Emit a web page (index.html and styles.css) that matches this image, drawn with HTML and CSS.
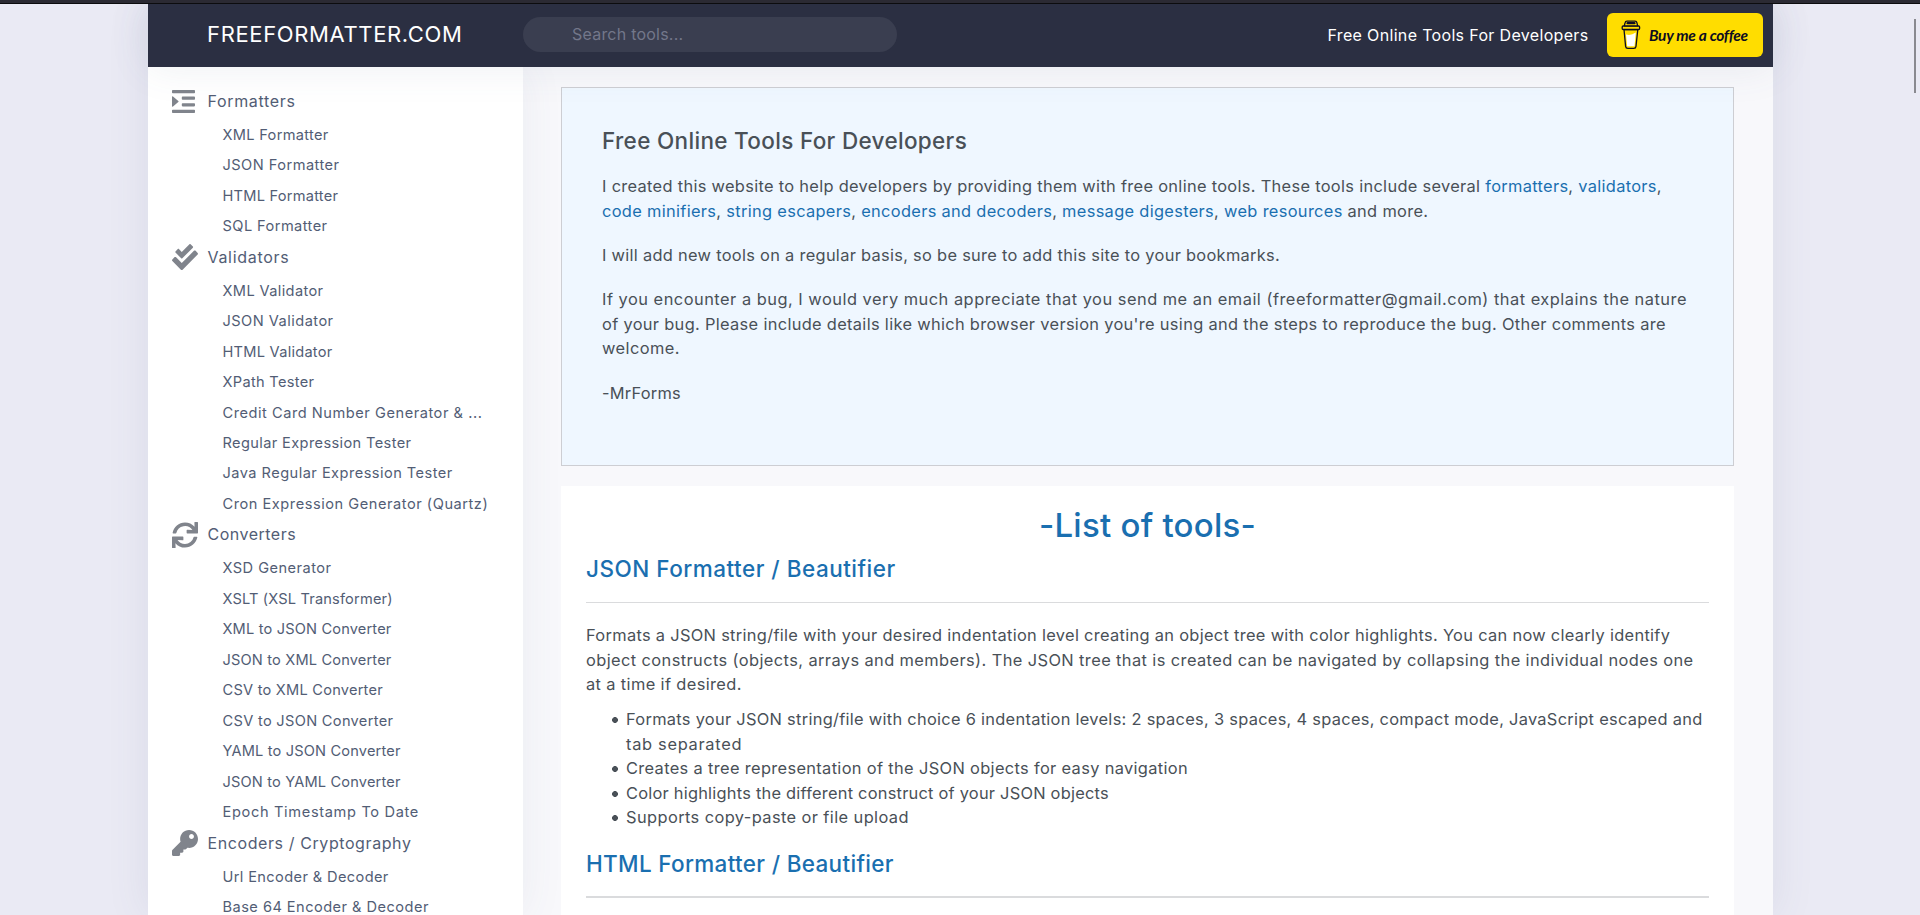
FILE: index.html
```html
<!DOCTYPE html>
<html lang="en">
<head>
<meta charset="utf-8">
<title>Free Online Tools For Developers</title>
<link rel="stylesheet" href="styles.css">
</head>
<body>
<div class="topline"></div>
<div class="scrollbar"></div>
<div class="page">
  <header class="header">
    <a class="logo">FREEFORMATTER.COM</a>
    <div class="search">Search tools...</div>
    <span class="tagline">Free Online Tools For Developers</span>
    <a class="coffee">
      <svg class="cup" viewBox="0 0 20 30" fill="none" stroke="#0d0c22" stroke-width="1.3" stroke-linejoin="round" stroke-linecap="round">
        <path d="M3 9.500 4.600 26.400Q4.800 28.400 6.800 28.400H12.800Q14.800 28.400 15 26.400L16.800 9.500z" fill="#ffdd00"/>
        <path d="M5 14.500Q10 16 14.800 12.500L13.500 26.300H6.200z" fill="#fff" stroke="none"/>
        <path d="M2.200 6H17.600Q18.600 6 18.600 7V8.500Q18.600 9.500 17.600 9.500H2.200Q1.200 9.500 1.200 8.500V7Q1.200 6 2.200 6z" fill="#ffdd00"/>
        <path d="M3.300 5.800 4 3Q4.400 1.200 6 1.200H14Q15.600 1.200 16 3L16.600 5.800z" fill="#ffdd00"/>
        <path d="M6.500 3.200h7" stroke-width="2.200"/>
      </svg>
      <span class="coffee-text">Buy me a coffee</span>
    </a>
  </header>
  <div class="columns">
    <nav class="sidebar">
      <h4 class="group t66"><span class="icon"><svg width="23" height="23" viewBox="0 0 23 23"><path d="M.8 0h21.400q.8 0 .8.800v1.600q0 .8-.8.800H.8Q0 3.200 0 2.400V.8Q0 0 .8 0zM10.600 6.600h11.600q.8 0 .8.800V9q0 .8-.8.800H10.600q-.8 0-.8-.8V7.400q0-.8.8-.8zM10.600 13.200h11.600q.8 0 .8.800v1.600q0 .8-.8.800H10.600q-.8 0-.8-.8V14q0-.8.8-.8zM.8 19.800h21.400q.8 0 .8.800v1.600q0 .8-.8.800H.8q-.8 0-.8-.8v-1.600q0-.8.8-.8zM0 7q0-1.300 1-.5l5.300 4.400q.7.600 0 1.200L1 16.500q-1 .8-1-.5z"/></svg></span>Formatters</h4>
      <a class="item t31">XML Formatter</a>
      <a class="item t46">JSON Formatter</a>
      <a class="item t23">HTML Formatter</a>
      <a class="item t42">SQL Formatter</a>
      <h4 class="group t70"><span class="icon"><svg width="26" height="26" viewBox="0 0 512 512"><path d="M505 174.800l-39.600-39.600c-9.400-9.400-24.600-9.400-33.900 0L192 374.700 80.600 263.200c-9.400-9.400-24.600-9.400-33.900 0L7 302.900c-9.400 9.400-9.400 24.600 0 34L175 505c9.400 9.400 24.600 9.400 33.900 0l296-296.200c9.400-9.500 9.400-24.700.1-34zm-324.300 106c6.200 6.300 16.400 6.300 22.600 0l208-208.200c6.200-6.300 6.200-16.400 0-22.600L366.100 4.700c-6.200-6.300-16.400-6.300-22.600 0L192 156.200l-55.400-55.500c-6.200-6.300-16.400-6.300-22.600 0L68.700 146c-6.200 6.300-6.200 16.400 0 22.600l112 112.200z"/></svg></span>Validators</h4>
      <a class="item t38">XML Validator</a>
      <a class="item t46">JSON Validator</a>
      <a class="item t26">HTML Validator</a>
      <a class="item t31">XPath Tester</a>
      <a class="item t54">Credit Card Number Generator &amp; ...</a>
      <a class="item t38">Regular Expression Tester</a>
      <a class="item t46">Java Regular Expression Tester</a>
      <a class="item t54">Cron Expression Generator (Quartz)</a>
      <h4 class="group t50"><span class="icon"><svg width="26" height="26" viewBox="0 0 512 512"><path d="M440.650 12.570l4 82.770A247.160 247.160 0 0 0 255.830 8C134.730 8 33.910 94.920 12.290 209.820A12 12 0 0 0 24.090 224h49.050a12 12 0 0 0 11.670-9.260 175.910 175.910 0 0 1 317-56.940l-101.460-4.860a12 12 0 0 0-12.570 12v47.410a12 12 0 0 0 12 12H500a12 12 0 0 0 12-12V12a12 12 0 0 0-12-12h-47.370a12 12 0 0 0-11.980 12.570zM255.830 432a175.610 175.610 0 0 1-146-77.800l101.800 4.870a12 12 0 0 0 12.570-12v-47.400a12 12 0 0 0-12-12H12a12 12 0 0 0-12 12V500a12 12 0 0 0 12 12h47.350a12 12 0 0 0 12-12.600l-4.150-82.570A247.170 247.170 0 0 0 255.830 504c121.110 0 221.930-86.920 243.550-201.820a12 12 0 0 0-11.800-14.180h-49.050a12 12 0 0 0-11.670 9.260A175.860 175.860 0 0 1 255.830 432z"/></svg></span>Converters</h4>
      <a class="item t46">XSD Generator</a>
      <a class="item t17">XSLT (XSL Transformer)</a>
      <a class="item t17">XML to JSON Converter</a>
      <a class="item t17">JSON to XML Converter</a>
      <a class="item t23">CSV to XML Converter</a>
      <a class="item t31">CSV to JSON Converter</a>
      <a class="item t17">YAML to JSON Converter</a>
      <a class="item t17">JSON to YAML Converter</a>
      <a class="item t66">Epoch Timestamp To Date</a>
      <h4 class="group t60"><span class="icon"><svg width="26" height="26" viewBox="0 0 512 512"><path d="M512 176.001C512 273.203 433.202 352 336 352c-11.220 0-22.190-1.062-32.827-3.069l-24.012 27.014A23.999 23.999 0 0 1 261.223 384H224v40c0 13.255-10.745 24-24 24h-40v40c0 13.255-10.745 24-24 24H24c-13.255 0-24-10.745-24-24v-78.059c0-6.365 2.529-12.470 7.029-16.971l161.802-161.802C163.108 213.814 160 195.271 160 176 160 78.798 238.797.001 335.999 0 433.488-.001 512 78.511 512 176.001zM336 128c0 26.510 21.490 48 48 48s48-21.490 48-48-21.490-48-48-48-48 21.490-48 48z"/></svg></span>Encoders / Cryptography</h4>
      <a class="item t38">Url Encoder &amp; Decoder</a>
      <a class="item t46">Base 64 Encoder &amp; Decoder</a>
    </nav>
    <main class="content">
      <section class="intro">
        <h2 class="intro-title">Free Online Tools For Developers</h2>
        <p><span class="t31">I created this website to help developers by providing them with free online tools. These tools include several <a>formatters</a>, <a>validators</a>,</span><br>
        <span class="t32"><a>code minifiers</a>, <a>string escapers</a>, <a>encoders and decoders</a>, <a>message digesters</a>, <a>web resources</a> and more.</span></p>
        <p class="t30">I will add new tools on a regular basis, so be sure to add this site to your bookmarks.</p>
        <p><span class="t50">If you encounter a bug, I would very much appreciate that you send me an email (freeformatter@gmail.com) that explains the nature</span><br>
        <span class="t32">of your bug. Please include details like which browser version you're using and the steps to reproduce the bug. Other comments are</span><br>
        <span class="t42">welcome.</span></p>
        <p class="t23">-MrForms</p>
      </section>
      <section class="tools">
        <h1 class="tools-title">-List of tools-</h1>
        <h2 class="tool-name t50">JSON Formatter / Beautifier</h2>
        <hr class="rule">
        <p><span class="t31">Formats a JSON string/file with your desired indentation level creating an object tree with color highlights. You can now clearly identify</span><br>
        <span class="t405">object constructs (objects, arrays and members). The JSON tree that is created can be navigated by collapsing the individual nodes one</span><br>
        <span class="t38">at a time if desired.</span></p>
        <ul class="features">
          <li><span class="t29">Formats your JSON string/file with choice 6 indentation levels: 2 spaces, 3 spaces, 4 spaces, compact mode, JavaScript escaped and</span><br><span class="t70">tab separated</span></li>
          <li class="t34">Creates a tree representation of the JSON objects for easy navigation</li>
          <li class="t23">Color highlights the different construct of your JSON objects</li>
          <li class="t405">Supports copy-paste or file upload</li>
        </ul>
        <h2 class="tool-name t32">HTML Formatter / Beautifier</h2>
        <hr class="rule thick">
      </section>
    </main>
  </div>
</div>
</body>
</html>
```
FILE: styles.css
```css
* { box-sizing: border-box; }
html, body { height: 100%; overflow: hidden; }
body {
  margin: 0;
  background: #eaeaf4;
  color: #495057;
  font: 16.4px/24.6px Inter, "Liberation Sans", sans-serif;
}
h1, h2, h4, p, ul { margin: 0; padding: 0; }

.topline { height: 4px; background: #2b2a33; border-bottom: 1px solid #0c0c0e; position: relative; z-index: 3; }
.scrollbar { position: fixed; top: 19px; left: 1914px; width: 2px; height: 74px; background: #8a8a90; }

.page {
  width: 1625px;
  height: 911px;
  margin-left: 148px;
  background: #f8f8fb;
  box-shadow: 0 0 40px rgba(82, 85, 130, .1);
}

.header {
  position: relative;
  z-index: 2;
  display: flex;
  align-items: center;
  height: 63px;
  padding: 0 10px 0 59px;
  background: #2b2f42;
  color: #fff;
  box-shadow: 0 0 40px rgba(82, 95, 127, .1);
}
.logo { width: 316px; font-size: 22px; letter-spacing: .64px; padding-bottom: 2px; }
.search {
  width: 374px;
  height: 35px;
  margin-top: -2px;
  padding-left: 49px;
  border-radius: 18px;
  background: #3a3e50;
  color: #73778a;
  font-size: 16px;
  line-height: 34px;
  letter-spacing: .22px;
}
.tagline { margin-left: auto; font-size: 16px; letter-spacing: .336px; padding-right: 18.5px; }
.coffee {
  display: flex;
  align-items: center;
  width: 156px;
  height: 44px;
  margin-top: -2px;
  padding-left: 14px;
  border-radius: 6px;
  background: #fd0;
  color: #0d0c22;
}
.cup { width: 20px; height: 30px; margin-right: 8px; }
.coffee-text { font: italic 700 15.5px/30px Lato, sans-serif; white-space: nowrap; letter-spacing: -.28px; }

.columns { display: flex; height: 848px; overflow: hidden; }

.sidebar { width: 375px; flex: none; padding-top: 18.8px; background: #fff; color: #525d75; box-shadow: 0 0 40px rgba(82, 95, 127, .08); }
.group {
  display: flex;
  align-items: center;
  gap: 9.5px;
  height: 34px;
  padding: 0 0 3.2px 24px;
  font-size: 16px;
  font-weight: 400;
  line-height: 30.8px;
}
.icon { display: flex; width: 26px; fill: #80848c; }
.item { display: block; height: 30.48px; padding-left: 74.5px; font-size: 14.6px; line-height: 30.48px; white-space: nowrap; }

.content { padding: 20px 39px 0 38px; width: 1250px; }
.intro {
  height: 379px;
  padding: 39.4px 40px 0;
  border: 1px solid #cdced3;
  background: #eff7ff;
  white-space: nowrap;
}
.intro-title { margin-bottom: 19.8px; font-size: 22.5px; font-weight: 500; line-height: 27px; letter-spacing: .32px; }
.intro p { margin-bottom: 19.6px; }
.intro a { color: #1a6fb0; }

.tools { height: 440px; margin-top: 20px; padding: 18.7px 25px 0; background: #fff; white-space: nowrap; }
.tools-title { color: #1a6fb0; font-size: 33px; font-weight: 500; line-height: 40px; letter-spacing: .25px; text-align: center; }
.tool-name { margin-top: 10.3px; color: #1a6fb0; font-size: 22.5px; font-weight: 500; line-height: 27px; }
.rule { margin: 20px 0; border: 0; height: 1px; background: #dadbdd; }
.rule.thick { height: 2px; margin-top: 19px; }
.features { margin: 10.3px 0 20.300px; padding-left: 26px; list-style: none; }
.features li { padding-left: 14px; background: radial-gradient(circle at 3px 13px, #495057 2.600px, transparent 3.200px) no-repeat; }

.t17 { letter-spacing: .165px; }
.t23 { letter-spacing: .234px; }
.t26 { letter-spacing: .257px; }
.t29 { letter-spacing: .29px; }
.t30 { letter-spacing: .295px; }
.t31 { letter-spacing: .311px; }
.t32 { letter-spacing: .321px; }
.t34 { letter-spacing: .343px; }
.t38 { letter-spacing: .375px; }
.t405 { letter-spacing: .405px; }
.t42 { letter-spacing: .43px; }
.t46 { letter-spacing: .465px; }
.t50 { letter-spacing: .497px; }
.t54 { letter-spacing: .535px; }
.t60 { letter-spacing: .59px; }
.t66 { letter-spacing: .66px; }
.t70 { letter-spacing: .7px; }
```
